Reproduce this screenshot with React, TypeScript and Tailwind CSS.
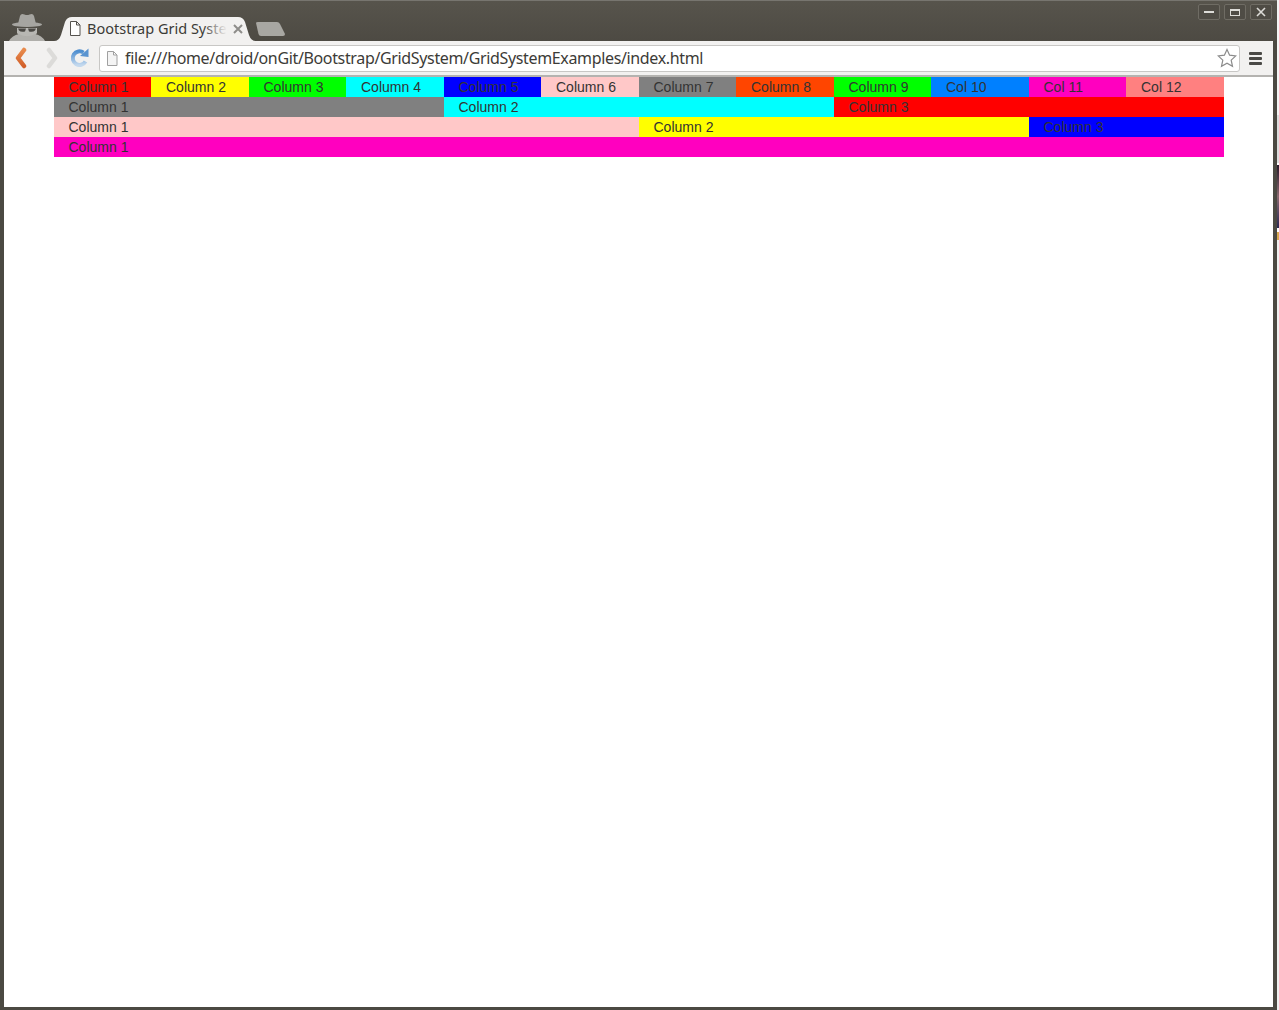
const font = "[font-family:'Liberation_Sans',Arial,sans-serif]";

type Cell = { label: string; bg: string; span: string };

const rows: Cell[][] = [
  [
    { label: 'Column 1', bg: 'bg-[#ff0000]', span: 'col-span-1' },
    { label: 'Column 2', bg: 'bg-[#ffff00]', span: 'col-span-1' },
    { label: 'Column 3', bg: 'bg-[#00ff00]', span: 'col-span-1' },
    { label: 'Column 4', bg: 'bg-[#00ffff]', span: 'col-span-1' },
    { label: 'Column 5', bg: 'bg-[#0000ff]', span: 'col-span-1' },
    { label: 'Column 6', bg: 'bg-[#ffc8c8]', span: 'col-span-1' },
    { label: 'Column 7', bg: 'bg-[#808080]', span: 'col-span-1' },
    { label: 'Column 8', bg: 'bg-[#ff4500]', span: 'col-span-1' },
    { label: 'Column 9', bg: 'bg-[#00ff00]', span: 'col-span-1' },
    { label: 'Col 10', bg: 'bg-[#0080ff]', span: 'col-span-1' },
    { label: 'Col 11', bg: 'bg-[#ff00bf]', span: 'col-span-1' },
    { label: 'Col 12', bg: 'bg-[#ff8080]', span: 'col-span-1' },
  ],
  [
    { label: 'Column 1', bg: 'bg-[#808080]', span: 'col-span-4' },
    { label: 'Column 2', bg: 'bg-[#00ffff]', span: 'col-span-4' },
    { label: 'Column 3', bg: 'bg-[#ff0000]', span: 'col-span-4' },
  ],
  [
    { label: 'Column 1', bg: 'bg-[#ffc8c8]', span: 'col-span-6' },
    { label: 'Column 2', bg: 'bg-[#ffff00]', span: 'col-span-4' },
    { label: 'Column 3', bg: 'bg-[#0000ff]', span: 'col-span-2' },
  ],
  [{ label: 'Column 1', bg: 'bg-[#ff00bf]', span: 'col-span-12' }],
];

function Spy() {
  return (
    <svg width="36" height="28" viewBox="0 0 36 28" className="self-end shrink-0">
      <path d="M9 11 L11 3 Q12 0 15.5 1.5 Q18 2.5 20.5 1.5 Q24 0 25 3 L27 11 Z" fill="#a6a5a1" />
      <ellipse cx="18" cy="11.5" rx="15" ry="2.6" fill="#a6a5a1" />
      <path d="M8 15 H28 V20 Q26 24 18 24 Q10 24 8 20 Z" fill="#b8b7b3" />
      <path d="M9 15.5 H17 L16 18.5 Q12 19.5 10 17.5 Z M19 15.5 H27 L26 17.5 Q24 19.5 20 18.5 Z" fill="#4a4844" />
      <path d="M0 28 Q3 22.5 10 21 Q18 25.5 26 21 Q33 22.5 36 28 Z" fill="#b0afab" />
    </svg>
  );
}

function PageIcon({ light }: { light?: boolean }) {
  return (
    <svg width="12" height="15" viewBox="0 0 12 15" className="shrink-0">
      <path
        d="M1.5.5 H7.5 L11 4 V14.5 H1.5 Z M7.5.5 V4 H11"
        fill={light ? '#f4f4f4' : '#ffffff'}
        stroke={light ? '#a0a0a0' : '#55534f'}
      />
    </svg>
  );
}

function Tab() {
  return (
    <div className="relative w-[202px] h-[25px] ml-[9px] shrink-0">
      <svg width="202" height="25" viewBox="0 0 202 25" className="absolute inset-0">
        <path
          d="M0 25 Q5 25 7 19 L11 6 Q13 1 18 1 H184 Q189 1 191 6 L195 19 Q197 25 202 25 Z"
          fill="#f2f1f0"
        />
      </svg>
      <div className="relative flex items-center h-full pl-[15px]">
        <PageIcon />
        <div className="relative ml-[6px] mb-[2px] w-[140px] whitespace-nowrap text-[14.5px] leading-[24px] text-[#3c3b37] [font-family:'Noto_Sans',sans-serif]">
          Bootstrap Grid Syste
          <div className="absolute right-0 top-[4px] bottom-0 w-[24px] bg-gradient-to-r from-transparent to-[#f2f1f0]" />
        </div>
        <svg width="10" height="10" viewBox="0 0 10 10" className="ml-[6px]">
          <path d="M1 1 L9 9 M9 1 L1 9" stroke="#8e8d8a" strokeWidth="2" />
        </svg>
      </div>
    </div>
  );
}

function NewTab() {
  return (
    <svg width="30" height="14" viewBox="0 0 30 14" className="shrink-0 ml-[-1px] mb-[5px]">
      <path d="M1 1 Q1 0 3 0 H22 Q24 0 25 2 L30 12 Q30 14 28 14 H6 Q4 14 3.5 12 Z" fill="#a8a7a2" />
    </svg>
  );
}

function WinButton({ children }: { children: React.ReactNode }) {
  return (
    <div className="w-[22px] h-[16px] flex items-center justify-center rounded-[2px] border border-[#6f6c64] bg-[#4f4c45]">
      {children}
    </div>
  );
}

function TitleBar() {
  return (
    <div className="relative h-[41px] flex items-end pl-[9px] bg-gradient-to-b from-[#57544c] to-[#4d4a43] border-t border-[#77756f]">
      <Spy />
      <Tab />
      <NewTab />
      <div className="absolute top-[3px] right-[5px] flex gap-[4px]">
        <WinButton>
          <div className="w-[10px] h-[2px] bg-[#dddcd8]" />
        </WinButton>
        <WinButton>
          <div className="w-[10px] h-[7px] border border-t-2 border-[#dddcd8]" />
        </WinButton>
        <WinButton>
          <svg width="10" height="10" viewBox="0 0 10 10">
            <path d="M1 1 L9 9 M9 1 L1 9" stroke="#dddcd8" strokeWidth="1.6" />
          </svg>
        </WinButton>
      </div>
    </div>
  );
}

function Toolbar() {
  return (
    <div className="h-[36px] flex items-center bg-[#f2f1f0] border-b-2 border-[#b4b3b0] pl-[8px] rounded-t-[2px]">
      <svg width="20" height="22" viewBox="0 0 20 22" className="shrink-0">
        <defs>
          <linearGradient id="back" x1="0" y1="0" x2="0" y2="1">
            <stop offset="0" stopColor="#e88a4c" />
            <stop offset="1" stopColor="#d2602a" />
          </linearGradient>
        </defs>
        <path d="M12 3 L6 11 L12 19" fill="none" stroke="url(#back)" strokeWidth="4.5" strokeLinejoin="round" strokeLinecap="round" />
      </svg>
      <svg width="20" height="22" viewBox="0 0 20 22" className="shrink-0 ml-[10px]">
        <path d="M7 3 L13 11 L7 19" fill="none" stroke="#dcdbd9" strokeWidth="4.5" strokeLinejoin="round" strokeLinecap="round" />
      </svg>
      <svg width="20" height="20" viewBox="0 0 20 20" className="shrink-0 ml-[8px]">
        <defs>
          <linearGradient id="reload" x1="0" y1="0" x2="0" y2="1">
            <stop offset="0" stopColor="#4f8fd0" />
            <stop offset="1" stopColor="#c4d9ee" />
          </linearGradient>
        </defs>
        <path d="M15.5 13.5 A6.8 6.8 0 1 1 13.5 4.6" fill="none" stroke="url(#reload)" strokeWidth="4" />
        <path d="M10 8 L18.5 9 L18.5 .5 Z" fill="#5a94d0" />
      </svg>
      <div className="w-[1141px] h-[27px] ml-[9px] flex items-center pl-[6px] bg-white rounded-[3px] border border-[#c8c7c5] shrink-0">
        <PageIcon light />
        <span className="ml-[7px] text-[16px] tracking-[-0.35px] whitespace-nowrap text-[#3c3b37] [font-family:'Noto_Sans',sans-serif]">
          file:///home/droid/onGit/Bootstrap/GridSystem/GridSystemExamples/index.html
        </span>
        <svg width="20" height="20" viewBox="0 0 20 20" className="ml-auto mr-[2px]">
          <path
            d="M10 1.5 L12.6 7.2 L18.8 7.9 L14.2 12.1 L15.5 18.3 L10 15.2 L4.5 18.3 L5.8 12.1 L1.2 7.9 L7.4 7.2 Z"
            fill="#ffffff"
            stroke="#8b8b8b"
            strokeWidth="1.2"
          />
        </svg>
      </div>
      <div className="ml-[9px] w-[13px] flex flex-col gap-[2px] shrink-0">
        <div className="h-[3px] rounded-[1px] bg-[#4a4946]" />
        <div className="h-[3px] rounded-[1px] bg-[#4a4946]" />
        <div className="h-[3px] rounded-[1px] bg-[#4a4946]" />
      </div>
    </div>
  );
}

function GridDemo() {
  return (
    <div className={`w-[1170px] ml-[49.5px] ${font} text-[14px] leading-[20px] text-[#333333]`}>
      {rows.map((row, i) => (
        <div key={i} className="grid grid-cols-12">
          {row.map((cell, j) => (
            <div key={j} className={`${cell.span} ${cell.bg} px-[15px] h-[20px]`}>
              {cell.label}
            </div>
          ))}
        </div>
      ))}
    </div>
  );
}

export default function App() {
  return (
    <div className="w-[1279px] h-[1010px] flex overflow-hidden bg-white">
      <div className="w-[1277px] h-[1010px] flex flex-col bg-[#4b4942] rounded-t-[4px] shrink-0">
        <TitleBar />
        <div className="flex-1 flex flex-col mx-[4px] mb-[3px] min-h-0 bg-white">
          <Toolbar />
          <GridDemo />
        </div>
      </div>
      {/* bit of desktop showing to the right of the window */}
      <div className="w-[2px] h-[1010px] flex flex-col shrink-0">
        <div className="h-[115px] bg-[#f4f4f4]" />
        <div className="h-[48px] bg-[#dcdcdc]" />
        <div className="h-[2px] bg-white" />
        <div className="h-[63px] bg-gradient-to-b from-[#2a1a2a] via-[#8a6a70] to-[#2c2850]" />
        <div className="h-[4px] bg-white" />
        <div className="h-[8px] bg-[#d8a850]" />
        <div className="flex-1 bg-[#f0f0f0]" />
      </div>
    </div>
  );
}
